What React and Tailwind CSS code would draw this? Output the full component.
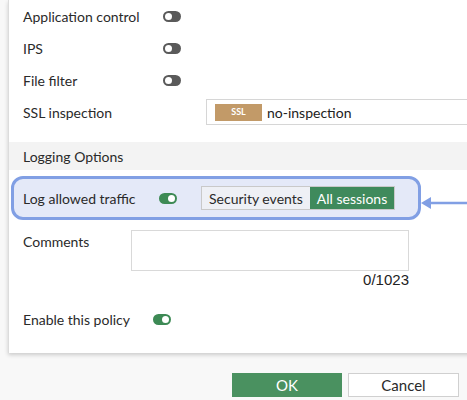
const Toggle = ({ on }) => (
  <span
    className={`relative inline-block shrink-0 w-[18px] h-[11px] rounded-full ${on ? 'bg-[#3d8a55]' : 'bg-[#5a5a5a]'}`}
  >
    <span
      className={`absolute top-[2px] w-[7px] h-[7px] rounded-full bg-white ${on ? 'right-[2px]' : 'left-[2px]'}`}
    />
  </span>
)

const Row = ({ label, labelWidth, children }) => (
  <div className="flex items-center h-[32px] pl-[14px]">
    <div className="shrink-0 text-[14px]" style={{ width: labelWidth }}>
      {label}
    </div>
    {children}
  </div>
)

const App = () => {
  return (
    <div className="relative w-[467px] h-[400px] overflow-hidden bg-[#f8f8f8] font-['Lato','Noto_Sans',sans-serif] text-[#2a2a2a]">
      {/* Policy panel */}
      <div className="ml-[8px] w-[480px] h-[353px] bg-white border-l border-[#dcdcdc] shadow-[0_2px_4px_rgba(0,0,0,0.18)]">
        <Row label="Application control" labelWidth={140}>
          <Toggle />
        </Row>
        <Row label="IPS" labelWidth={140}>
          <Toggle />
        </Row>
        <Row label="File filter" labelWidth={140}>
          <Toggle />
        </Row>
        <Row label="SSL inspection" labelWidth={183}>
          <div className="flex shrink-0 items-center gap-[5px] h-[26px] w-[300px] border border-[#d6d6d6] bg-white pl-[8px]">
            <span className="w-[47px] h-[17px] bg-[#c29a68] text-white text-[9px] font-bold flex items-center justify-center">
              SSL
            </span>
            <span className="text-[14px] text-[#222]">no-inspection</span>
          </div>
        </Row>

        {/* Logging Options */}
        <div className="mt-[14px] h-[28px] bg-[#f3f3f3] flex items-center pl-[14px] text-[14px]">
          Logging Options
        </div>

        <div className="mt-[6px] ml-[2px] w-[410px] h-[44px] rounded-[12px] border-[3px] border-[#819fe4] bg-[#e4e9f8] flex items-center pl-[9px]">
          <span className="w-[136px] text-[14px]">Log allowed traffic</span>
          <Toggle on />
          <div className="ml-[24px] flex h-[24px] border border-[#c9c9c9] text-[14px]">
            <span className="px-[7px] flex items-center bg-[#eef0f5]">Security events</span>
            <span className="px-[7px] flex items-center bg-[#3f8a5c] text-white">All sessions</span>
          </div>
        </div>

        {/* Comments */}
        <div className="flex pl-[14px] mt-[10px]">
          <span className="w-[108px] text-[14px] pt-[1px]">Comments</span>
          <div className="flex flex-col items-end">
            <div className="w-[278px] h-[41px] border-[1.5px] border-[#d9d9d9] bg-white" />
            <span className="text-[15px] leading-[18px] text-[#222] font-['Liberation_Sans',sans-serif]">0/1023</span>
          </div>
        </div>

        <div className="flex items-center pl-[14px] mt-[20px] h-[20px]">
          <span className="w-[130px] text-[14px]">Enable this policy</span>
          <Toggle on />
        </div>
      </div>

      {/* Arrow pointing at highlight */}
      <svg className="absolute left-[420px] top-[195px]" width="47" height="16" viewBox="0 0 47 16">
        <line x1="6" y1="8" x2="47" y2="8" stroke="#819fe4" strokeWidth="2.5" />
        <polygon points="1,8 11,2 11,14" fill="#819fe4" />
      </svg>

      {/* Footer buttons */}
      <div className="absolute left-[232px] top-[373px] flex gap-[6px]">
        <button className="w-[110px] h-[24px] bg-[#4a9160] text-white text-[15px]">OK</button>
        <button className="w-[111px] h-[24px] bg-white border border-[#d0d0d0] text-[15px]">Cancel</button>
      </div>
    </div>
  )
}

export default App
